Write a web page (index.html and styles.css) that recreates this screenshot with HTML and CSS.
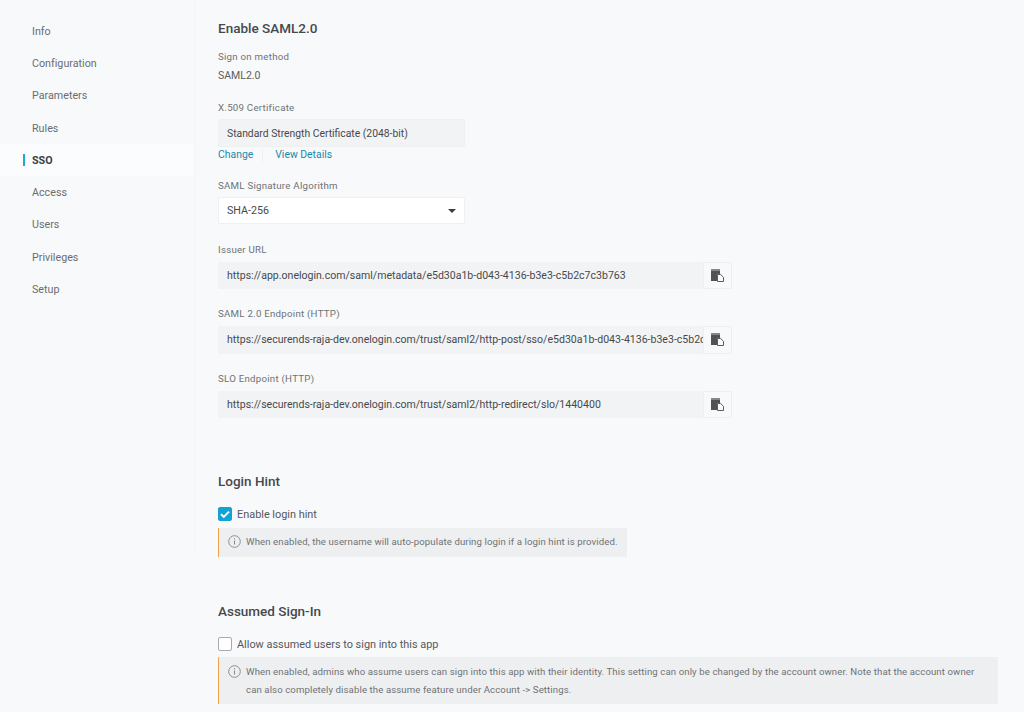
FILE: index.html
```html
<!DOCTYPE html>
<html lang="en">
<head>
    <meta charset="UTF-8">
    <title>SSO</title>
    <link rel="stylesheet" href="styles.css">
</head>
<body>
    <div class="page">
        <!-- Side nav -->
        <nav class="sidebar">
            <a class="nav-item">Info</a>
            <a class="nav-item">Configuration</a>
            <a class="nav-item">Parameters</a>
            <a class="nav-item">Rules</a>
            <a class="nav-item active">SSO</a>
            <a class="nav-item">Access</a>
            <a class="nav-item">Users</a>
            <a class="nav-item">Privileges</a>
            <a class="nav-item">Setup</a>
        </nav>

        <main class="content">
            <h2 class="first">Enable SAML2.0</h2>

            <div class="label method-label">Sign on method</div>
            <div class="plain-value">SAML2.0</div>

            <div class="label cert-label">X.509 Certificate</div>
            <div class="field cert-field">Standard Strength Certificate (2048-bit)</div>
            <div class="links">
                <a class="link">Change</a>
                <span class="divider"></span>
                <a class="link">View Details</a>
            </div>

            <div class="label algo-label">SAML Signature Algorithm</div>
            <div class="select">
                <span>SHA-256</span>
                <span class="caret"></span>
            </div>

            <div class="label url-label first-url">Issuer URL</div>
            <div class="copy-row">
                <div class="field url-field">https://app.onelogin.com/saml/metadata/e5d30a1b-d043-4136-b3e3-c5b2c7c3b763</div>
                <button class="copy-btn">
                    <svg width="13" height="13" viewBox="0 0 13 13"><path fill="#85888b" d="M0 0h9v2H0z"/><path fill="#505356" d="M0 2h9v3H6v7H0z"/><path fill="#f8f9fb" stroke="#5a5d60" d="M6.5 5.5h3.2l2.8 2.8v4.2h-6z"/></svg>
                </button>
            </div>

            <div class="label url-label">SAML 2.0 Endpoint (HTTP)</div>
            <div class="copy-row">
                <div class="field url-field">https://securends-raja-dev.onelogin.com/trust/saml2/http-post/sso/e5d30a1b-d043-4136-b3e3-c5b2c7c3b763</div>
                <button class="copy-btn">
                    <svg width="13" height="13" viewBox="0 0 13 13"><path fill="#85888b" d="M0 0h9v2H0z"/><path fill="#505356" d="M0 2h9v3H6v7H0z"/><path fill="#f8f9fb" stroke="#5a5d60" d="M6.5 5.5h3.2l2.8 2.8v4.2h-6z"/></svg>
                </button>
            </div>

            <div class="label url-label">SLO Endpoint (HTTP)</div>
            <div class="copy-row">
                <div class="field url-field">https://securends-raja-dev.onelogin.com/trust/saml2/http-redirect/slo/1440400</div>
                <button class="copy-btn">
                    <svg width="13" height="13" viewBox="0 0 13 13"><path fill="#85888b" d="M0 0h9v2H0z"/><path fill="#505356" d="M0 2h9v3H6v7H0z"/><path fill="#f8f9fb" stroke="#5a5d60" d="M6.5 5.5h3.2l2.8 2.8v4.2h-6z"/></svg>
                </button>
            </div>

            <h2 class="hint-title">Login Hint</h2>
            <label class="check-row">
                <span class="checkbox checked">
                    <svg width="14" height="14" viewBox="0 0 14 14"><path d="M3 7.2l2.8 2.7L11 4.6" fill="none" stroke="#fff" stroke-width="2"/></svg>
                </span>
                Enable login hint
            </label>
            <div class="note note-short">
                <svg class="info-icon" width="13" height="13" viewBox="0 0 13 13"><circle cx="6.5" cy="6.5" r="5.8" fill="none" stroke="#8b8e91"/><path d="M6.5 5.6v4M6.5 3.2v1.2" stroke="#8b8e91" stroke-width="1.1"/></svg>
                <p>When enabled, the username will auto-populate during login if a login hint is provided.</p>
            </div>

            <h2 class="assumed-title">Assumed Sign-In</h2>
            <label class="check-row">
                <span class="checkbox"></span>
                Allow assumed users to sign into this app
            </label>
            <div class="note note-long">
                <svg class="info-icon" width="13" height="13" viewBox="0 0 13 13"><circle cx="6.5" cy="6.5" r="5.8" fill="none" stroke="#8b8e91"/><path d="M6.5 5.6v4M6.5 3.2v1.2" stroke="#8b8e91" stroke-width="1.1"/></svg>
                <p>When enabled, admins who assume users can sign into this app with their identity. This setting can only be changed by the account owner. Note that the account owner can also completely disable the assume feature under Account -&gt; Settings.</p>
            </div>
        </main>
    </div>
</body>
</html>
```

FILE: styles.css
```css
html, body {
    height: 100%;
}

body {
    margin: 0;
    font-family: Roboto, "Liberation Sans", sans-serif;
    background: #f8f9fb;
    color: #46494c;
    overflow: hidden;
}

.page {
    display: flex;
    align-items: flex-start;
    height: 712px;
    overflow: hidden;
}

.sidebar {
    width: 194px;
    height: 538px;
    padding-top: 15px;
    border-right: 1px solid #f3f4f6;
    flex-shrink: 0;
}

.nav-item {
    display: flex;
    align-items: center;
    height: 32.3px;
    padding-left: 32px;
    font-size: 10.7px;
    letter-spacing: 0.02px;
    color: #6a6d70;
    position: relative;
}

.nav-item.active {
    background: #fbfcfd;
    color: #3c3f42;
    font-weight: 700;
}

.nav-item.active::before {
    content: "";
    position: absolute;
    left: 23px;
    top: 10px;
    width: 2px;
    height: 12px;
    background: #1aa7d4;
}

.content {
    flex: 1;
    padding-left: 23px;
    min-width: 0;
}

h2 {
    margin: 0;
    font-size: 13.5px;
    font-weight: 500;
    line-height: 18px;
    color: #46494c;
}

h2.first {
    margin-top: 19px;
}

.label {
    font-size: 9.7px;
    line-height: 14px;
    letter-spacing: 0.25px;
    color: #6f7275;
}

.method-label {
    margin-top: 13px;
}

.plain-value {
    margin-top: 4.5px;
    font-size: 10.5px;
    line-height: 14px;
    color: #5b5e61;
}

.cert-label {
    margin-top: 18.5px;
}

.field {
    box-sizing: border-box;
    height: 27.5px;
    padding: 0 9px;
    background: #f2f3f5;
    font-size: 10.55px;
    line-height: 27.5px;
    white-space: nowrap;
    overflow: hidden;
    border-radius: 2px;
}

.cert-field {
    margin-top: 4px;
    width: 247px;
    border: 1px solid #eff0f2;
    font-size: 10.35px;
    line-height: 27px;
    padding: 0 8px;
}

.links {
    display: flex;
    align-items: center;
    height: 14px;
    margin-top: 1px;
}

.link {
    font-size: 10.4px;
    line-height: 14px;
    color: #1b87ac;
}

.divider {
    width: 1px;
    height: 14px;
    margin: 0 12px 0 9px;
    background: #eff0f2;
}

.algo-label {
    margin-top: 17px;
}

.select {
    box-sizing: border-box;
    display: flex;
    align-items: center;
    justify-content: space-between;
    width: 247px;
    height: 27.5px;
    margin-top: 4px;
    padding: 1px 8px 0;
    background: #fff;
    border: 1px solid #eff0f2;
    border-radius: 2px;
    font-size: 10.7px;
    color: #46494c;
}

.caret {
    width: 0;
    height: 0;
    border-left: 4px solid transparent;
    border-right: 4px solid transparent;
    border-top: 4px solid #3c3f42;
}

.url-label {
    margin-top: 18px;
}

.first-url {
    margin-top: 18.5px;
}

.copy-row {
    display: flex;
    margin-top: 5px;
    width: 514px;
}

.url-field {
    flex: 1;
    min-width: 0;
    border-radius: 2px 0 0 2px;
}

.copy-btn {
    display: flex;
    align-items: center;
    justify-content: center;
    flex: 0 0 29px;
    height: 27.5px;
    padding: 0;
    background: #f8f9fb;
    border: 1px solid #eceef0;
    border-radius: 0 2px 2px 0;
}

.hint-title {
    margin-top: 54px;
}

.check-row {
    display: flex;
    align-items: center;
    gap: 5px;
    margin-top: 17px;
    height: 14px;
    font-size: 10.9px;
    color: #55585b;
}

.checkbox {
    box-sizing: border-box;
    display: flex;
    width: 14px;
    height: 14px;
    background: #fff;
    border: 1px solid #a8abae;
    border-radius: 2px;
}

.checkbox.checked {
    background: #12a3d2;
    border-color: #12a3d2;
}

.checkbox svg {
    margin: -1px;
}

.note {
    display: flex;
    box-sizing: border-box;
    margin-top: 7px;
    padding: 5px 9px 0;
    background: #eeeff1;
    border-left: 1px solid #f5a14a;
    font-size: 9.62px;
    line-height: 18px;
    letter-spacing: 0.1px;
    color: #6f7275;
}

.note p {
    margin: 0;
}

.info-icon {
    flex-shrink: 0;
    margin: 2px 5px 0 0;
}

.note-short {
    width: 409px;
    height: 29px;
}

.assumed-title {
    margin-top: 45px;
}

.note-long {
    width: 780px;
    height: 47px;
    margin-top: 6px;
    padding-top: 6px;
}
```
